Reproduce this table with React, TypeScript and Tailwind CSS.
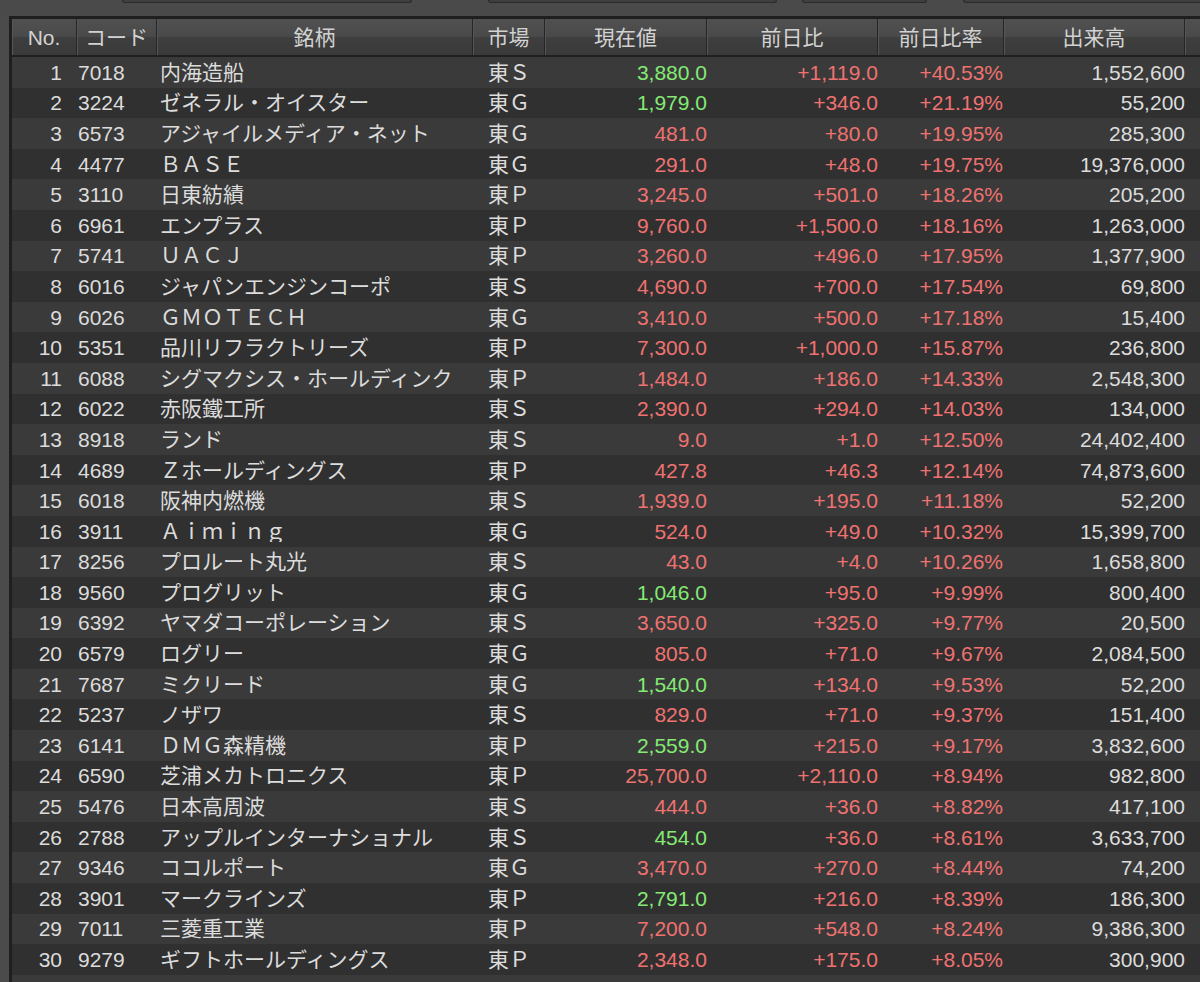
import React from "react";

type Row = [number, string, string, string, string, boolean, string, string, string];

const rows: Row[] = [
  [1, "7018", "内海造船", "東Ｓ", "3,880.0", true, "+1,119.0", "+40.53%", "1,552,600"],
  [2, "3224", "ゼネラル・オイスター", "東Ｇ", "1,979.0", true, "+346.0", "+21.19%", "55,200"],
  [3, "6573", "アジャイルメディア・ネット", "東Ｇ", "481.0", false, "+80.0", "+19.95%", "285,300"],
  [4, "4477", "ＢＡＳＥ", "東Ｇ", "291.0", false, "+48.0", "+19.75%", "19,376,000"],
  [5, "3110", "日東紡績", "東Ｐ", "3,245.0", false, "+501.0", "+18.26%", "205,200"],
  [6, "6961", "エンプラス", "東Ｐ", "9,760.0", false, "+1,500.0", "+18.16%", "1,263,000"],
  [7, "5741", "ＵＡＣＪ", "東Ｐ", "3,260.0", false, "+496.0", "+17.95%", "1,377,900"],
  [8, "6016", "ジャパンエンジンコーポ", "東Ｓ", "4,690.0", false, "+700.0", "+17.54%", "69,800"],
  [9, "6026", "ＧＭＯＴＥＣＨ", "東Ｇ", "3,410.0", false, "+500.0", "+17.18%", "15,400"],
  [10, "5351", "品川リフラクトリーズ", "東Ｐ", "7,300.0", false, "+1,000.0", "+15.87%", "236,800"],
  [11, "6088", "シグマクシス・ホールディンク", "東Ｐ", "1,484.0", false, "+186.0", "+14.33%", "2,548,300"],
  [12, "6022", "赤阪鐵工所", "東Ｓ", "2,390.0", false, "+294.0", "+14.03%", "134,000"],
  [13, "8918", "ランド", "東Ｓ", "9.0", false, "+1.0", "+12.50%", "24,402,400"],
  [14, "4689", "Ｚホールディングス", "東Ｐ", "427.8", false, "+46.3", "+12.14%", "74,873,600"],
  [15, "6018", "阪神内燃機", "東Ｓ", "1,939.0", false, "+195.0", "+11.18%", "52,200"],
  [16, "3911", "Ａｉｍｉｎｇ", "東Ｇ", "524.0", false, "+49.0", "+10.32%", "15,399,700"],
  [17, "8256", "プロルート丸光", "東Ｓ", "43.0", false, "+4.0", "+10.26%", "1,658,800"],
  [18, "9560", "プログリット", "東Ｇ", "1,046.0", true, "+95.0", "+9.99%", "800,400"],
  [19, "6392", "ヤマダコーポレーション", "東Ｓ", "3,650.0", false, "+325.0", "+9.77%", "20,500"],
  [20, "6579", "ログリー", "東Ｇ", "805.0", false, "+71.0", "+9.67%", "2,084,500"],
  [21, "7687", "ミクリード", "東Ｇ", "1,540.0", true, "+134.0", "+9.53%", "52,200"],
  [22, "5237", "ノザワ", "東Ｓ", "829.0", false, "+71.0", "+9.37%", "151,400"],
  [23, "6141", "ＤＭＧ森精機", "東Ｐ", "2,559.0", true, "+215.0", "+9.17%", "3,832,600"],
  [24, "6590", "芝浦メカトロニクス", "東Ｐ", "25,700.0", false, "+2,110.0", "+8.94%", "982,800"],
  [25, "5476", "日本高周波", "東Ｓ", "444.0", false, "+36.0", "+8.82%", "417,100"],
  [26, "2788", "アップルインターナショナル", "東Ｓ", "454.0", true, "+36.0", "+8.61%", "3,633,700"],
  [27, "9346", "ココルポート", "東Ｇ", "3,470.0", false, "+270.0", "+8.44%", "74,200"],
  [28, "3901", "マークラインズ", "東Ｐ", "2,791.0", true, "+216.0", "+8.39%", "186,300"],
  [29, "7011", "三菱重工業", "東Ｐ", "7,200.0", false, "+548.0", "+8.24%", "9,386,300"],
  [30, "9279", "ギフトホールディングス", "東Ｐ", "2,348.0", false, "+175.0", "+8.05%", "300,900"],
];

const FONT = {
  fontFamily: '"Liberation Sans", "Noto Sans CJK JP", Arial, sans-serif',
};

const RED = "text-[#ef7270]";
const GREEN = "text-[#84ea74]";

function HeaderCell({ w, label }: { w: string; label: string }) {
  return (
    <div
      className={`${w} h-full flex items-center justify-center border-r border-[#252525] shadow-[inset_1px_0_0_#565656] whitespace-nowrap overflow-hidden`}
    >
      {label}
    </div>
  );
}

export default function App() {
  return (
    <div
      className="w-[1200px] h-[982px] overflow-hidden bg-[#4a4a4a] text-[21px] leading-none text-[#dcdcdc] flex flex-col"
      style={FONT}
    >
      {/* top toolbar remnants */}
      <div className="h-[16px] shrink-0 flex items-start pl-[122px]">
        <div className="w-[290px] h-[3px] rounded-b-[3px] bg-[#3f3f3f] border-b border-x border-[#2a2a2a]" />
        <div className="w-[289px] ml-[76px] h-[3px] rounded-b-[3px] bg-[#3f3f3f] border-b border-x border-[#2a2a2a]" />
        <div className="w-[125px] ml-[25px] h-[3px] rounded-b-[3px] bg-[#3f3f3f] border-b border-x border-[#2a2a2a]" />
        <div className="flex-1 ml-[36px] h-[3px] rounded-bl-[3px] bg-[#3f3f3f] border-b border-l border-[#2a2a2a]" />
      </div>
      <div className="flex flex-1 min-h-0">
        <div className="w-[9px] shrink-0 bg-[#4b4b4b]" />
        <div className="flex-1 flex flex-col border-l-[3px] border-t-[3px] border-[#1f1f1f] min-h-0">
          {/* header */}
          <div className="h-[38px] shrink-0 flex text-[#d2d2d2] border-b-[2px] border-[#1f1f1f] bg-[linear-gradient(to_bottom,#505050_0%,#4a4a4a_48%,#3e3e3e_52%,#3a3a3a_100%)]">
            <HeaderCell w="w-[65px]" label="No." />
            <HeaderCell w="w-[80px]" label="コード" />
            <HeaderCell w="w-[316px]" label="銘柄" />
            <HeaderCell w="w-[72px]" label="市場" />
            <HeaderCell w="w-[162px]" label="現在値" />
            <HeaderCell w="w-[171px]" label="前日比" />
            <HeaderCell w="w-[126px]" label="前日比率" />
            <HeaderCell w="w-[181px]" label="出来高" />
            <div className="flex-1 h-full shadow-[inset_1px_0_0_#565656]" />
          </div>
          {/* rows */}
          <div className="flex flex-col">
            {rows.map((r) => (
              <div
                key={r[0]}
                className={`h-[30.6px] shrink-0 flex items-center whitespace-nowrap ${
                  r[0] % 2 === 1 ? "bg-[#3a3a3a]" : "bg-[#303030]"
                }`}
              >
                <div className="w-[65px] text-right pr-[15px]">{r[0]}</div>
                <div className="w-[80px] pl-[1px]">{r[1]}</div>
                <div className="w-[316px] pl-[3px] overflow-hidden">{r[2]}</div>
                <div className="w-[72px] pl-[15px]">{r[3]}</div>
                <div className={`w-[162px] text-right ${r[5] ? GREEN : RED}`}>{r[4]}</div>
                <div className={`w-[171px] text-right pr-[0px] ${RED}`}>{r[6]}</div>
                <div className={`w-[126px] text-right pr-[1px] ${RED}`}>{r[7]}</div>
                <div className="w-[181px] text-right">{r[8]}</div>
                <div className="flex-1" />
              </div>
            ))}
            <div className="h-[30.6px] shrink-0 bg-[#3a3a3a]" />
          </div>
        </div>
      </div>
    </div>
  );
}
